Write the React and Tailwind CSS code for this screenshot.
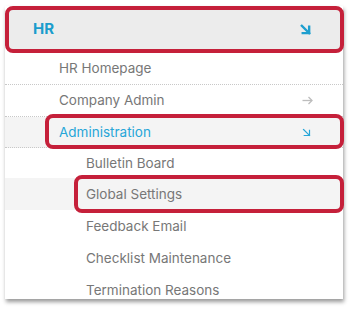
import React from "react";

const Dotted = "border-b border-dotted border-[#c8c8c8]";

function ArrowDR({ size = 11, sw = 2.6, color = "#1e9fcf" }) {
  return (
    <svg width={size} height={size} viewBox="0 0 12 12" fill="none" stroke={color} strokeWidth={sw} strokeLinecap="square">
      <path d="M2 2 L10 10" />
      <path d="M3 10 H10 V3" />
    </svg>
  );
}

function ArrowRight() {
  return (
    <svg width="11" height="9" viewBox="0 0 11 9" fill="none" stroke="#bdbdbd" strokeWidth="1.3">
      <path d="M0.5 4.5 H10" />
      <path d="M6.5 1 L10 4.5 L6.5 8" />
    </svg>
  );
}

function RedBox({ cls }) {
  return <div className={"absolute border-[4px] border-[#c5203a] rounded-[8px] pointer-events-none " + cls} />;
}

export default function App() {
  return (
    <div className="w-[352px] h-[309px] bg-white overflow-hidden font-[Inter,sans-serif]">
      <div className="ml-[5px] mt-[6px] w-[338px] h-[293px] bg-white shadow-[1px_3px_4px_rgba(0,0,0,0.4)] flex flex-col">
        <div className="w-[339px] h-[47px] shrink-0 border-[4px] border-[#c5203a] rounded-[8px] bg-[#ececec] flex items-center justify-between pl-[24px] pr-[29px]">
          <span className="text-[15px] font-bold text-[#1b9dcc]">HR</span>
          <ArrowDR />
        </div>
        <div className={"h-[32px] shrink-0 flex items-center pl-[54px] text-[13.5px] text-[#777] " + Dotted}>HR Homepage</div>
        <div className={"h-[32px] shrink-0 flex items-center justify-between pl-[54px] pr-[30px] text-[13.5px] text-[#777] " + Dotted}>
          <span>Company Admin</span>
          <ArrowRight />
        </div>
        <div className={"relative h-[31px] shrink-0 flex items-center justify-between pl-[54px] pr-[32px] bg-[#f4f4f4] text-[13.5px] text-[#27a6d8] " + Dotted}>
          <span>Administration</span>
          <ArrowDR size={9} sw={1.6} color="#27a6d8" />
          <RedBox cls="left-[40px] -right-[1px] -top-[3px] -bottom-[2px]" />
        </div>
        <div className="h-[30px] shrink-0 flex items-center pl-[81px] text-[13.5px] text-[#777]">Bulletin Board</div>
        <div className="relative h-[32px] shrink-0 flex items-center pl-[81px] bg-[#f4f4f4] text-[13.5px] text-[#777]">
          <span>Global Settings</span>
          <RedBox cls="left-[69px] -right-[1px] -top-[3px] -bottom-[3px]" />
        </div>
        <div className="h-[32px] shrink-0 flex items-center pl-[81px] text-[13.5px] text-[#777]">Feedback Email</div>
        <div className="h-[32px] shrink-0 flex items-center pl-[81px] text-[13.5px] text-[#777]">Checklist Maintenance</div>
        <div className="h-[32px] shrink-0 flex items-center pl-[81px] text-[13.5px] text-[#777]">Termination Reasons</div>
      </div>
    </div>
  );
}
